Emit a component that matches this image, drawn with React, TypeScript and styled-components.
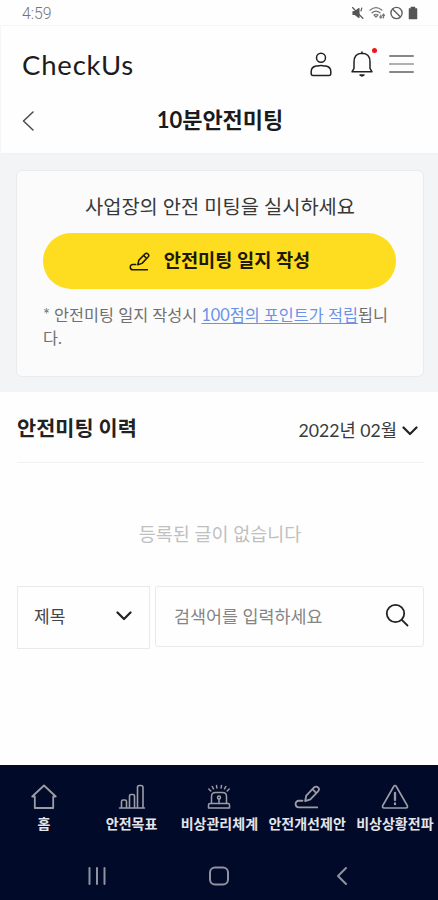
import React from "react";
import styled, { createGlobalStyle } from "styled-components";

const GlobalStyle = createGlobalStyle`
  * { box-sizing: border-box; }
  body { margin: 0; background: #fefefe; }
  button { border: 0; padding: 0; margin: 0; background: none; font: inherit; color: inherit; display: flex; }
  h1, h2, p { margin: 0; }
  svg { display: block; flex: none; }
`;

const Screen = styled.div`
  width: 438px;
  height: 900px;
  display: flex;
  flex-direction: column;
  overflow: hidden;
  background: #fefefe;
  color: #222;
  font-family: Lato, "Noto Sans CJK KR", sans-serif;
`;

const StatusBar = styled.div`
  height: 26px;
  flex: none;
  display: flex;
  align-items: center;
  justify-content: space-between;
  padding: 2px 20px 0 22px;
  border-bottom: 1px solid #f5f5f5;
  color: #757575;
  font: 300 15.8px/24px Roboto, sans-serif;
`;

const StatusIcons = styled.div`
  display: flex;
  align-items: center;
  gap: 5px;
  padding-bottom: 1px;
`;

const Header = styled.header`
  height: 128px;
  flex: none;
  border-left: 1px solid #f6f6f6;
  border-bottom: 1px solid #f0f1f2;
`;

const BrandRow = styled.div`
  height: 77px;
  display: flex;
  align-items: center;
  justify-content: space-between;
  padding: 0 24px 0 21px;
`;

const Logo = styled.div`
  font-size: 27.5px;
  line-height: 40px;
  letter-spacing: 0.8px;
  color: #1c1c1c;
`;

const HeaderActions = styled.div`
  display: flex;
  align-items: center;
  padding-bottom: 1px;
`;

const ActionButton = styled.button<{ $gap?: number }>`
  position: relative;
  margin-left: ${(p) => p.$gap ?? 0}px;
`;

const AlertDot = styled.span`
  position: absolute;
  top: -3px;
  right: -4px;
  width: 5px;
  height: 5px;
  border-radius: 50%;
  background: #f01414;
`;

const TitleRow = styled.div`
  display: grid;
  grid-template-columns: 61px 1fr 60px;
  align-items: center;
  height: 34px;
`;

const BackButton = styled.button`
  padding: 2px 0 0 20px;
`;

const PageTitle = styled.h1`
  text-align: center;
  font-size: 22px;
  line-height: 32px;
  font-weight: 700;
  color: #1b1b1b;
`;

const Promo = styled.section`
  height: 238px;
  flex: none;
  padding: 16px 14px 15px 16px;
  background: #f3f4f6;
`;

const Card = styled.div`
  height: 207px;
  padding: 20px 26px 0;
  background: #fbfbfb;
  border: 1px solid #e9ebed;
  border-radius: 6px;
`;

const CardTitle = styled.p`
  text-align: center;
  font-size: 19.8px;
  line-height: 30px;
  color: #383838;
`;

const WriteButton = styled.button`
  width: 353px;
  height: 56px;
  margin-top: 12px;
  padding-bottom: 5px;
  border-radius: 28px;
  background: #fedd20;
  align-items: center;
  justify-content: center;
  gap: 14px;
  color: #1d1800;
  font-size: 18.7px;
  font-weight: 700;

  svg {
    margin-top: 5px;
  }
`;

const Note = styled.p`
  margin-top: 14px;
  width: 353px;
  font-size: 16.3px;
  line-height: 23px;
  color: #707070;
  word-break: break-all;
`;

const NoteLink = styled.a`
  color: #6b92e6;
  text-decoration: underline;
  text-underline-offset: 2px;
  text-decoration-thickness: 1px;
`;

const History = styled.main`
  flex: 1;
  padding: 0 14px 0 17px;
`;

const HistoryHeader = styled.div`
  height: 71px;
  display: flex;
  align-items: center;
  justify-content: space-between;
  border-bottom: 1px solid #f2f2f2;
`;

const HistoryTitle = styled.h2`
  padding-top: 1px;
  font-size: 20.8px;
  line-height: 30px;
  font-weight: 700;
  color: #222;
`;

const MonthButton = styled.button`
  align-items: center;
  gap: 5px;
  padding: 8px 6px 0 0;
  font-size: 17.7px;
  line-height: 26px;
  color: #3a3a3a;

  svg {
    margin-bottom: 1px;
  }
`;

const Empty = styled.p`
  padding: 58px 1px 38px 0;
  text-align: center;
  font-size: 18.5px;
  line-height: 27px;
  color: #c0c0c0;
`;

const SearchRow = styled.div`
  display: flex;
  align-items: flex-start;
  gap: 5px;
`;

const Field = styled.div<{ $width: number; $height: number; $muted?: boolean }>`
  width: ${(p) => p.$width}px;
  height: ${(p) => p.$height}px;
  display: flex;
  align-items: center;
  justify-content: space-between;
  padding: 0 ${(p) => (p.$muted ? 14 : 17)}px ${(p) => (p.$muted ? 3 : 4)}px ${(p) => (p.$muted ? 18 : 16)}px;
  border: 1px solid #eaeaea;
  border-radius: ${(p) => (p.$muted ? 3 : 0)}px;
  color: ${(p) => (p.$muted ? "#858585" : "#444")};
  font-size: ${(p) => (p.$muted ? 17.4 : 17)}px;
`;

const Footer = styled.footer`
  height: 135px;
  flex: none;
  background: #020a29;
`;

const Tabs = styled.nav`
  height: 80px;
  display: grid;
  grid-template-columns: repeat(5, 87.75px);
`;

const Tab = styled.button`
  flex-direction: column;
  align-items: center;
  padding-top: 18px;
  color: #9c9da4;
`;

const TabLabel = styled.span`
  margin-top: 4px;
  font-size: 14px;
  line-height: 20px;
  font-weight: 700;
  white-space: nowrap;
  color: #e4e5e9;
`;

const SystemBar = styled.div`
  height: 55px;
  display: grid;
  grid-template-columns: 72px 123px 48px 123px 72px;
  align-items: center;
  padding-top: 6px;
  color: #9092a0;
`;

const SystemButton = styled.button<{ $column: string; $shift?: number }>`
  grid-row: 1;
  grid-column: ${(p) => p.$column};
  justify-content: center;
  padding: ${(p) => {
    const shift = p.$shift ?? 0;
    return `0 ${Math.max(-shift, 0)}px 0 ${Math.max(shift, 0)}px`;
  }};
`;

type IconProps = {
  w: number;
  h: number;
  box?: string;
  weight?: number;
  children: React.ReactNode;
};

const Icon = ({ w, h, box, weight = 1.5, children }: IconProps) => (
  <svg
    width={w}
    height={h}
    viewBox={box ?? `0 0 ${w} ${h}`}
    fill="none"
    stroke="currentColor"
    strokeWidth={weight}
    strokeLinecap="round"
    strokeLinejoin="round"
  >
    {children}
  </svg>
);

const Chevron = () => (
  <Icon w={16} h={10} weight={2.2}>
    <path d="M1.5 1.5 8 8l6.5-6.5" stroke="#222" />
  </Icon>
);

const Pencil = ({ w, h, box, weight }: { w: number; h: number; box: string; weight: number }) => (
  <Icon w={w} h={h} box={box} weight={weight}>
    <path d="M11.8 16.8l1.2-5.8 8.2-8.6a2.9 2.9 0 0 1 4.2 0 2.9 2.9 0 0 1 0 4.1L17.300 15zM19.500 4.300l4.100 4.100" />
    <path d="M9 16.5H5.200c-4.800 0-4.600 7 .1 7H24.500" />
  </Icon>
);

const tabs = [
  {
    label: "홈",
    icon: (
      <Icon w={28} h={27} weight={1.8}>
        <path d="M4.8 13.5H2.2L14 2.5l11.8 11h-2.6V25H4.800z" />
      </Icon>
    ),
  },
  {
    label: "안전목표",
    icon: (
      <Icon w={28} h={27} weight={1.6}>
        <path d="M1.5 25h25M3.5 25v-6.500q0-1.500 1.500-1.500h2q1.500 0 1.500 1.500V25M11.500 25V13q0-1.500 1.500-1.500h2q1.500 0 1.500 1.500v12M19.500 25V4.500q0-2 2-2h1.500q2 0 2 2V25" />
      </Icon>
    ),
  },
  {
    label: "비상관리체계",
    icon: (
      <Icon w={28} h={27} weight={1.5}>
        <path d="M6.500 20.500v-7q0-4 4-4h7q4 0 4 4v7M5 20.500h18q1.500 0 1.500 1.500v3h-21v-3q0-1.500 1.500-1.500z" />
        <path d="M14 16v4.500" />
        <circle cx="14" cy="14.500" r="1.500" />
        <path d="M11.500 2.500l.4 2.500M16.500 2.500l-.4 2.500M7.200 3.500l1.300 2.300M20.800 3.500l-1.300 2.300M3.800 6l2 2M24.200 6l-2 2" />
      </Icon>
    ),
  },
  { label: "안전개선제안", icon: <Pencil w={28} h={27} box="-1 -2 29.500 28" weight={1.9} /> },
  {
    label: "비상상황전파",
    icon: (
      <Icon w={28} h={27} weight={1.7}>
        <path d="M14 2.500q.8 0 1.300 1l11 19.200Q27 25 25 25H3Q1 25 1.700 22.700l11-19.200q.5-1 1.300-1z" />
        <path d="M14 10v7M14 20.500v.7" strokeWidth="2.300" />
      </Icon>
    ),
  },
];

export default function App() {
  return (
    <>
      <GlobalStyle />
      <Screen>
        <StatusBar>
          <span>4:59</span>
          <StatusIcons>
            <Icon w={13} h={14} weight={1.1}>
              <path d="M2 5.500h2l4-3v9l-4-3H2z" fill="#555" stroke="#555" />
              <path d="M1.500 1.500l10.500 11M10 5l.8-3" stroke="#555" />
            </Icon>
            <Icon w={16} h={14} weight={1.2}>
              <path d="M1 4.200q6-5 12 0M3 6.800q4-3.500 8 0M5 9q2-1.500 4 0L7 11zM11.800 9v3M10.800 11l1 1 1-1M14.500 12V8M13.500 9.500l1-1.500 1 1.500" />
            </Icon>
            <Icon w={13} h={14} weight={1.4}>
              <circle cx="6.500" cy="7" r="5.600" stroke="#606060" />
              <path d="M2.700 3.200l7.600 7.600" stroke="#606060" />
            </Icon>
            <Icon w={10} h={14} weight={0.5}>
              <path d="M3 1h4v1.500h2V13H1V2.500h2z" fill="#555" stroke="#555" />
            </Icon>
          </StatusIcons>
        </StatusBar>

        <Header>
          <BrandRow>
            <Logo>CheckUs</Logo>
            <HeaderActions>
              <ActionButton aria-label="profile">
                <Icon w={22} h={26} weight={1.5}>
                  <circle cx="11" cy="6.800" r="4.500" />
                  <path d="M3 24.500q-1.800 0-1.800-2v-2q0-4.500 4.800-5.500h1.500q3.500-1 7 0H16q4.800 1 4.800 5.500v2q0 2-1.800 2z" />
                </Icon>
              </ActionButton>
              <ActionButton aria-label="notifications" $gap={19}>
                <Icon w={22} h={26} weight={1.5}>
                  <path d="M11 1v1.300M1 20.800h20l-2-3.500V11q0-8.500-8-8.700-8 .2-8 8.700v6.300z" />
                  <path d="M9 24q2 1.800 4 0z" fill="currentColor" />
                </Icon>
                <AlertDot />
              </ActionButton>
              <ActionButton aria-label="menu" $gap={16}>
                <Icon w={25} h={20} weight={1.5}>
                  <path d="M.8 2h23.400M.8 18h23.400" stroke="#606060" />
                  <path d="M.8 10h23.400" stroke="#b0b0b0" strokeWidth="2" />
                </Icon>
              </ActionButton>
            </HeaderActions>
          </BrandRow>
          <TitleRow>
            <BackButton aria-label="back">
              <Icon w={14} h={20} weight={1.5}>
                <path d="M12 1L2.500 10 12 19" stroke="#4a4a4a" />
              </Icon>
            </BackButton>
            <PageTitle>10분안전미팅</PageTitle>
          </TitleRow>
        </Header>

        <Promo>
          <Card>
            <CardTitle>사업장의 안전 미팅을 실시하세요</CardTitle>
            <WriteButton>
              <Pencil w={21} h={19} box="0 0 28 25" weight={2} />
              안전미팅 일지 작성
            </WriteButton>
            <Note>
              * 안전미팅 일지 작성시 <NoteLink>100점의 포인트가 적립</NoteLink>됩니다.
            </Note>
          </Card>
        </Promo>

        <History>
          <HistoryHeader>
            <HistoryTitle>안전미팅 이력</HistoryTitle>
            <MonthButton>
              2022년 02월
              <Chevron />
            </MonthButton>
          </HistoryHeader>
          <Empty>등록된 글이 없습니다</Empty>
          <SearchRow>
            <Field $width={133} $height={63}>
              제목
              <Chevron />
            </Field>
            <Field $width={269} $height={61} $muted>
              검색어를 입력하세요
              <Icon w={24} h={24} weight={1.8}>
                <circle cx="10.500" cy="10.500" r="8.700" stroke="#222" />
                <path d="M16.800 16.800l5.700 5.700" stroke="#222" />
              </Icon>
            </Field>
          </SearchRow>
        </History>

        <Footer>
          <Tabs>
            {tabs.map((tab) => (
              <Tab key={tab.label}>
                {tab.icon}
                <TabLabel>{tab.label}</TabLabel>
              </Tab>
            ))}
          </Tabs>
          <SystemBar>
            <SystemButton $column="1 / 3" $shift={-2} aria-label="recents">
              <Icon w={20} h={20} weight={2}>
                <path d="M2.500 2v16M10 2v16M17.500 2v16" />
              </Icon>
            </SystemButton>
            <SystemButton $column="3" aria-label="home">
              <Icon w={22} h={20} weight={2}>
                <rect x="2" y="1.500" width="18" height="17" rx="5" />
              </Icon>
            </SystemButton>
            <SystemButton $column="4 / 6" $shift={2} aria-label="back">
              <Icon w={12} h={20} weight={2}>
                <path d="M10 2L2 10l8 8" />
              </Icon>
            </SystemButton>
          </SystemBar>
        </Footer>
      </Screen>
    </>
  );
}
